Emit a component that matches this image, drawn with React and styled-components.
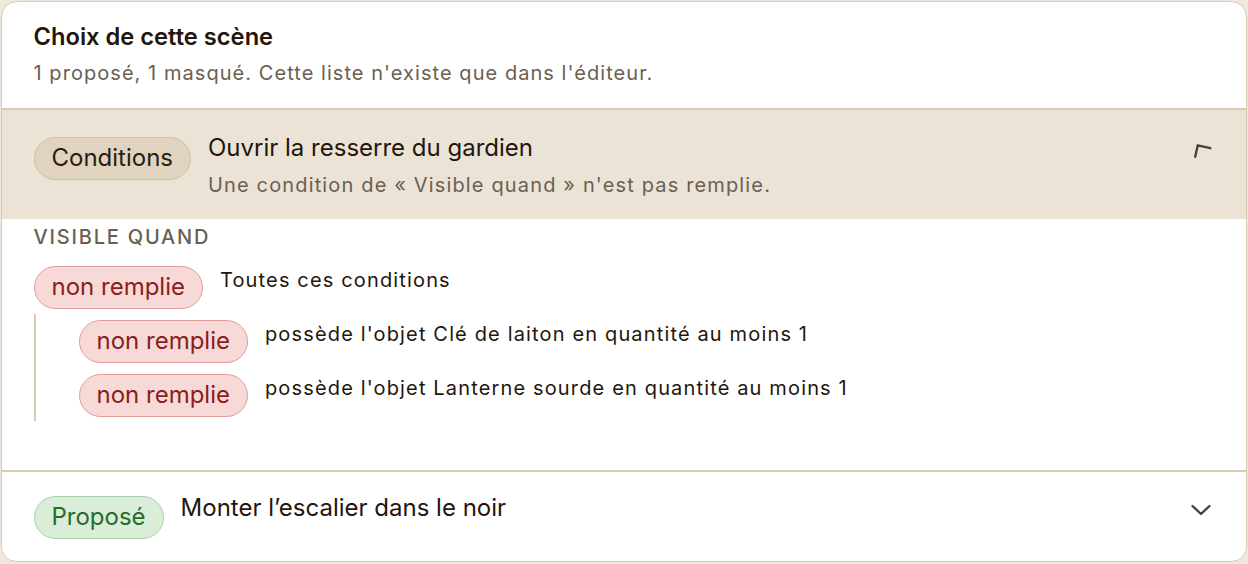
import React from "react";
import styled, { createGlobalStyle } from "styled-components";

const GlobalStyle = createGlobalStyle`
    * {
        box-sizing: border-box;
    }
    body {
        margin: 0;
        background: #efe8dc;
        font-family: Inter, "Noto Sans", sans-serif;
        color: #2a1c12;
    }
`;

const Card = styled.section`
    margin: 1px;
    width: 1246px;
    height: 561px;
    background: #ffffff;
    border: 1.5px solid #d8cbb3;
    border-radius: 16px;
    overflow: hidden;
`;

const Header = styled.header`
    padding: 20px 33px 22px 31.5px;
    border-bottom: 2px solid #d8cbb3;
`;

const Title = styled.h2`
    margin: 0;
    font-size: 23.7px;
    line-height: 30px;
    font-weight: 600;
    color: #24160d;
`;

const Subtitle = styled.p`
    margin: 8px 0 0;
    font-size: 20px;
    line-height: 26px;
    letter-spacing: 1.05px;
    color: #6a6052;
`;

const Item = styled.div`
    border-bottom: ${(p) => (p.$last ? "none" : "2px solid #d8cbb3")};
`;

const Row = styled.div`
    display: flex;
    align-items: flex-start;
    gap: 17px;
    padding: ${(p) => (p.$open ? "22.5px 33px 21px 31.5px" : "21px 33px 21px 31.5px")};
    background: ${(p) => (p.$open ? "#ebe3d6" : "#ffffff")};
`;

const tones = {
    neutral: { bg: "#e0d4c0", border: "#cfbfa4", color: "#2a1c12" },
    danger: { bg: "#f7dad7", border: "#e19c99", color: "#8b1d1b" },
    success: { bg: "#d9edd9", border: "#a6d0a8", color: "#256b2e" },
};

const Badge = styled.span`
    flex: none;
    display: inline-flex;
    align-items: center;
    height: 43px;
    margin-top: ${(p) => p.$offset || 0}px;
    padding: 0 17px;
    border-radius: 22px;
    font-size: 24px;
    line-height: 1;
    background: ${(p) => tones[p.$tone].bg};
    border: 1.5px solid ${(p) => tones[p.$tone].border};
    color: ${(p) => tones[p.$tone].color};
`;

const RowText = styled.div`
    flex: 1;
`;

const RowTitle = styled.div`
    font-size: 24px;
    line-height: 30px;
    color: #24160d;
`;

const RowSub = styled.div`
    margin-top: 9px;
    font-size: 20px;
    line-height: 26px;
    letter-spacing: 1.15px;
    color: #6a6052;
`;

const IconBox = styled.span`
    flex: none;
    width: 24px;
    height: 24px;
    margin-top: ${(p) => p.$top}px;
    color: #4a4438;
`;

const Details = styled.div`
    padding: 6px 33px 49px 31.5px;
`;

const SectionLabel = styled.div`
    font-size: 20px;
    line-height: 24px;
    font-weight: 500;
    letter-spacing: 1.8px;
    text-transform: uppercase;
    color: #6a6052;
    margin-bottom: 17px;
`;

const Condition = styled.div`
    display: flex;
    align-items: flex-start;
    gap: 17px;
`;

const ConditionText = styled.span`
    padding-top: 1px;
    font-size: 20px;
    line-height: 26px;
    letter-spacing: 1.15px;
    color: #24160d;
`;

const Nested = styled.div`
    display: flex;
    flex-direction: column;
    gap: 11px;
    margin-top: 5px;
    padding: 6px 0 4px 43px;
    border-left: 2px solid #d8cbb3;
`;

function ChevronUpTilted() {
    return (
        <svg width="24" height="24" viewBox="0 0 24 24" fill="none">
            <path
                d="M6.2 17.8 L8.8 6.3 L21.3 9.2"
                stroke="currentColor"
                strokeWidth="2.4"
                strokeLinecap="round"
                strokeLinejoin="round"
            />
        </svg>
    );
}

function ChevronDown() {
    return (
        <svg width="24" height="24" viewBox="0 0 24 24" fill="none">
            <path
                d="M3.5 7 L12 15 L20.5 7"
                stroke="currentColor"
                strokeWidth="2.4"
                strokeLinecap="round"
                strokeLinejoin="round"
            />
        </svg>
    );
}

const subConditions = [
    "possède l'objet Clé de laiton en quantité au moins 1",
    "possède l'objet Lanterne sourde en quantité au moins 1",
];

export default function App() {
    return (
        <>
            <GlobalStyle />
            <Card>
                <Header>
                    <Title>Choix de cette scène</Title>
                    <Subtitle>
                        1 proposé, 1 masqué. Cette liste n'existe que dans l'éditeur.
                    </Subtitle>
                </Header>

                <Item>
                    <Row $open>
                        <Badge $tone="neutral" $offset={4}>
                            Conditions
                        </Badge>
                        <RowText>
                            <RowTitle>Ouvrir la resserre du gardien</RowTitle>
                            <RowSub>
                                Une condition de « Visible quand » n'est pas remplie.
                            </RowSub>
                        </RowText>
                        <IconBox $top={6}>
                            <ChevronUpTilted />
                        </IconBox>
                    </Row>
                    <Details>
                        <SectionLabel>Visible quand</SectionLabel>
                        <Condition>
                            <Badge $tone="danger">non remplie</Badge>
                            <ConditionText>Toutes ces conditions</ConditionText>
                        </Condition>
                        <Nested>
                            {subConditions.map((text) => (
                                <Condition key={text}>
                                    <Badge $tone="danger">non remplie</Badge>
                                    <ConditionText>{text}</ConditionText>
                                </Condition>
                            ))}
                        </Nested>
                    </Details>
                </Item>

                <Item $last>
                    <Row>
                        <Badge $tone="success" $offset={3}>
                            Proposé
                        </Badge>
                        <RowText>
                            <RowTitle>Monter l’escalier dans le noir</RowTitle>
                        </RowText>
                        <IconBox $top={6}>
                            <ChevronDown />
                        </IconBox>
                    </Row>
                </Item>
            </Card>
        </>
    );
}
